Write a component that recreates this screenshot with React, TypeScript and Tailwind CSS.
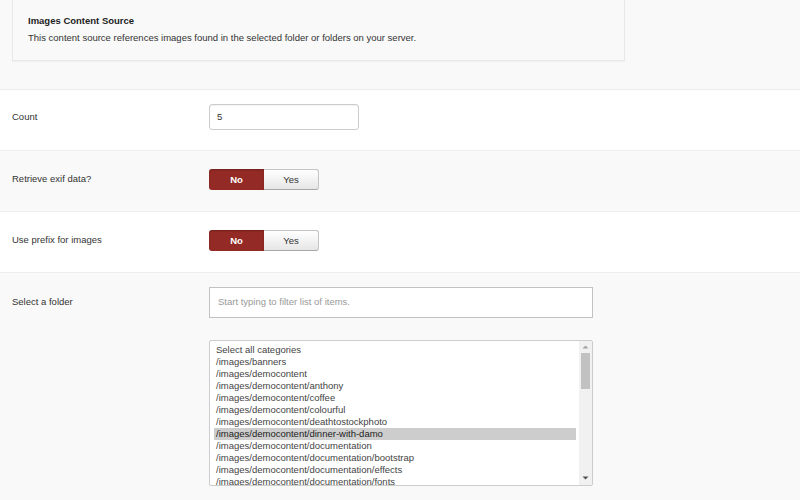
const FOLDERS = [
  "Select all categories",
  "/images/banners",
  "/images/democontent",
  "/images/democontent/anthony",
  "/images/democontent/coffee",
  "/images/democontent/colourful",
  "/images/democontent/deathtostockphoto",
  "/images/democontent/dinner-with-damo",
  "/images/democontent/documentation",
  "/images/democontent/documentation/bootstrap",
  "/images/democontent/documentation/effects",
  "/images/democontent/documentation/fonts",
];

function Toggle() {
  return (
    <div className="flex h-[21px] w-[110px] text-[9.5px] leading-none">
      <div className="flex w-[55px] items-center justify-center rounded-l-[3px] bg-[#942a25] font-bold text-white shadow-[inset_0_1px_2px_rgba(0,0,0,0.25)]">
        No
      </div>
      <div className="flex w-[55px] items-center justify-center rounded-r-[3px] border border-l-0 border-[#c4c4c4] border-b-[#a8a8a8] bg-gradient-to-b from-white to-[#e6e6e6] text-[#333]">
        Yes
      </div>
    </div>
  );
}

function Row({ label, white, children, pt }: { label: string; white?: boolean; children: React.ReactNode; pt: string }) {
  return (
    <div className={`h-[61px] border-b border-[#eeeeee] ${white ? "bg-white" : "bg-[#f9f9f9]"} ${pt}`}>
      <div className="flex items-center">
        <div className="w-[209px] pl-3 text-[9.5px] text-[#333]">{label}</div>
        {children}
      </div>
    </div>
  );
}

export default function App() {
  return (
    <div className="h-[500px] w-[800px] overflow-hidden bg-[#f9f9f9] font-['Liberation_Sans',Arial,sans-serif] text-[#333]">
      <div className="h-[90px] border-b border-[#ececec] pr-[175px] pl-3">
        <div className="h-[61px] border border-t-0 border-[#e8e8e8] bg-[#f9f9f9] pt-[15px] pl-[15px] shadow-[0_1px_1px_rgba(0,0,0,0.03)]">
          <div className="text-[9.5px] font-bold leading-[12px] text-[#222]">Images Content Source</div>
          <div className="mt-[5px] text-[9.5px] leading-[12px] text-[#333]">
            This content source references images found in the selected folder or folders on your server.
          </div>
        </div>
      </div>

      <Row label="Count" white pt="pt-[14px]">
        <div className="flex h-[26px] w-[150px] items-center rounded-[3px] border border-[#cccccc] bg-white pl-[7px] text-[9.5px] shadow-[inset_0_1px_1px_rgba(0,0,0,0.05)]">
          5
        </div>
      </Row>
      <Row label="Retrieve exif data?" pt="pt-[18px]">
        <Toggle />
      </Row>
      <Row label="Use prefix for images" white pt="pt-[18px]">
        <Toggle />
      </Row>

      <div className="flex pt-[14px]">
        <div className="w-[209px] pl-3 pt-[8px] text-[9.5px]">Select a folder</div>
        <div className="flex flex-col">
          <div className="flex h-[31px] w-[384px] items-center border border-[#c2c2c2] bg-white pl-[8px] text-[9.5px] text-[#999]">
            Start typing to filter list of items.
          </div>
          <div className="mt-[22px] flex h-[146px] w-[384px] overflow-hidden rounded-[2px] border border-[#cccccc] bg-white">
            <div className="flex-1 overflow-hidden pt-[3px] pr-[3px] pl-[4px]">
              {FOLDERS.map((f, i) => (
                <div
                  key={f}
                  className={`h-[12px] pl-[2px] text-[9.5px] leading-[12px] whitespace-nowrap ${i === 7 ? "bg-[#cdcdcd] text-[#222]" : "text-[#444]"}`}
                >
                  {f}
                </div>
              ))}
            </div>
            <div className="flex w-[13px] flex-col items-center bg-[#f1f1f1]">
              <svg width="7" height="10" viewBox="0 0 7 10" className="mt-[1px]">
                <path d="M0.5 6.5 L3.5 3.5 L6.5 6.5 Z" fill="#a3a3a3" />
              </svg>
              <div className="mt-[1px] h-[36px] w-[9px] bg-[#c1c1c1]" />
              <div className="flex-1" />
              <svg width="7" height="10" viewBox="0 0 7 10" className="mb-[2px]">
                <path d="M0.5 3.5 L3.5 6.5 L6.5 3.5 Z" fill="#505050" />
              </svg>
            </div>
          </div>
        </div>
      </div>
    </div>
  );
}
